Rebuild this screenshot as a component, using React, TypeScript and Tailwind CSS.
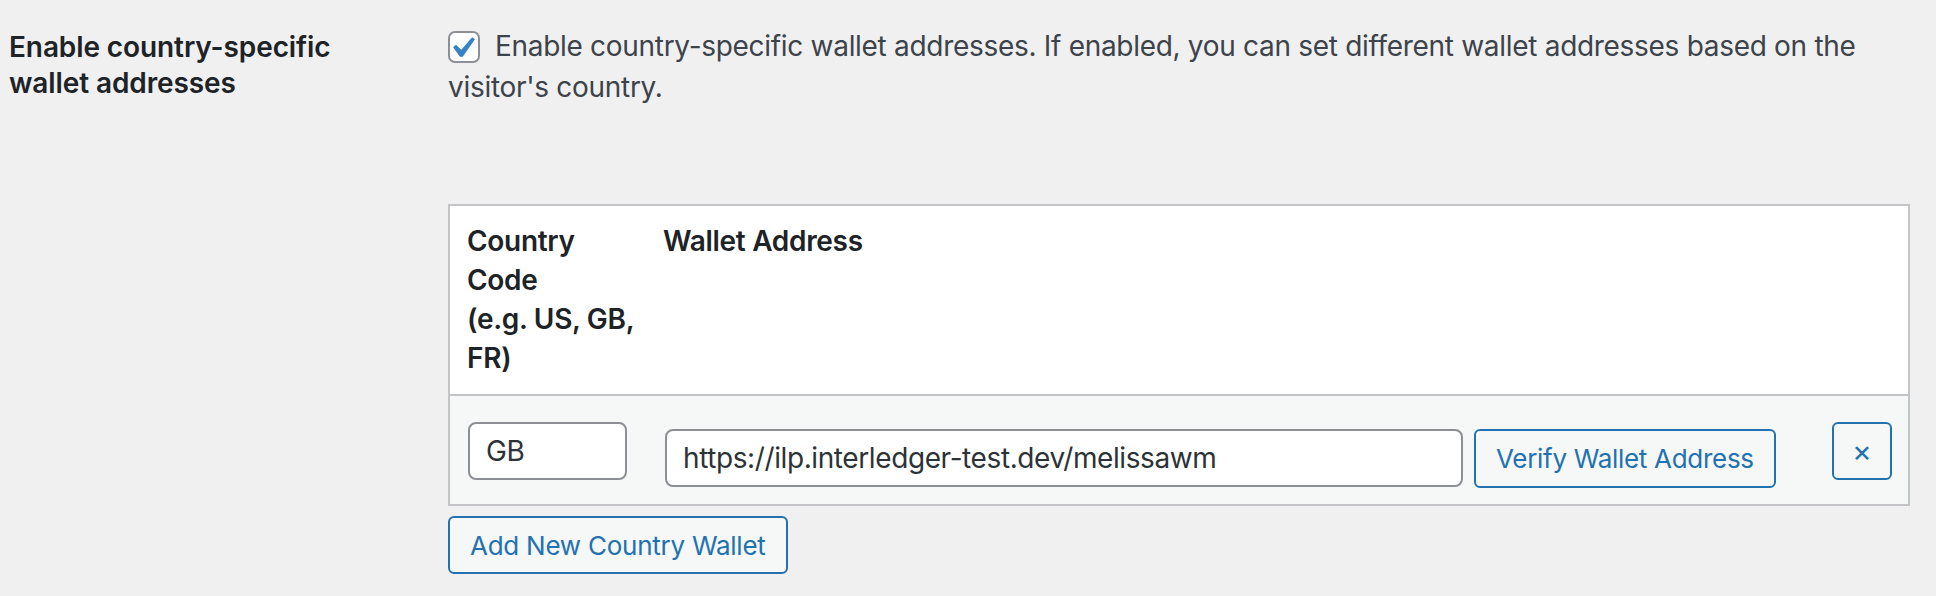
import { useState } from 'react';

interface CountryWallet {
  code: string;
  wallet: string;
}

export default function App() {
  const [enabled, setEnabled] = useState(true);
  const [rows, setRows] = useState<CountryWallet[]>([
    { code: 'GB', wallet: 'https://ilp.interledger-test.dev/melissawm' },
  ]);

  const removeRow = (i: number) => setRows(prev => prev.filter((_, idx) => idx !== i));
  const addRow = () => setRows(prev => [...prev, { code: '', wallet: '' }]);

  return (
    <div className="min-h-[596px] bg-[#f0f0f1] font-[Inter,sans-serif] flex">
      <div className="w-[448px] shrink-0 pl-[9px] pt-[29px] text-[28px] leading-[36.4px] font-semibold tracking-[-0.1px] text-[#1d2327] whitespace-nowrap">
        Enable country-specific<br />wallet addresses
      </div>

      <div className="pt-[26px] flex flex-col items-start">
        <label className="block text-[28px] leading-[41px] tracking-[-0.3px] text-[#3c434a] whitespace-nowrap">
          <span
            onClick={() => setEnabled(!enabled)}
            className="relative inline-block align-middle mt-[-3px] mr-[15px] w-[32px] h-[32px] bg-white border-2 border-[#8c8f94] rounded-[7px] cursor-pointer"
          >
            {enabled && (
              <svg viewBox="0 0 20 20" className="absolute left-[-9px] top-[-6px] w-[42px] h-[42px]">
                <path fill="#3582c4" d="M14.83 4.89l1.34.94-5.81 8.38H9.02L5.78 9.67l1.34-1.25 2.57 2.4z" />
              </svg>
            )}
          </span>
          Enable country-specific wallet addresses. If enabled, you can set different wallet addresses based on the
          <br />
          visitor's country.
        </label>

        {/* Country wallet table */}
        <div className="mt-[96px] w-[1462px] border-2 border-[#c3c4c7]">
          <div className="flex bg-white border-b-2 border-[#c3c4c7] py-[16px] text-[28px] leading-[39px] font-semibold tracking-[-0.3px] text-[#1d2327] whitespace-nowrap">
            <div className="w-[196px] pl-[17px]">
              Country<br />Code<br />(e.g. US, GB,<br />FR)
            </div>
            <div className="pl-[17px]">Wallet Address</div>
          </div>

          {rows.map((r, i) => (
            <div key={i} className="flex items-start h-[108px] bg-[#f6f7f7]">
              <div className="w-[196px] pl-[18px] pt-[26px]">
                <input
                  readOnly
                  value={r.code}
                  className="w-[159px] h-[58px] px-[16px] bg-white border-2 border-[#8c8f94] rounded-[8px] text-[28px] tracking-[-0.4px] text-[#2c3338] outline-none"
                />
              </div>
              <div className="flex items-start gap-[11px] pl-[19px] pt-[33px]">
                <input
                  readOnly
                  value={r.wallet}
                  className="w-[798px] h-[58px] px-[16px] bg-white border-2 border-[#8c8f94] rounded-[8px] text-[28px] tracking-[-0.4px] text-[#2c3338] outline-none"
                />
                <button className="h-[59px] px-[20px] border-2 border-[#2271b1] rounded-[6px] bg-[#f6f7f7] text-[26px] tracking-[-0.3px] text-[#2271b1] whitespace-nowrap cursor-pointer">
                  Verify Wallet Address
                </button>
              </div>
              <div className="ml-auto pr-[16px] pt-[26px]">
                <button
                  onClick={() => removeRow(i)}
                  className="w-[60px] h-[58px] flex items-center justify-center border-2 border-[#2271b1] rounded-[6px] bg-[#f6f7f7] text-[30px] text-[#2271b1] cursor-pointer"
                >
                  ×
                </button>
              </div>
            </div>
          ))}
        </div>

        <button
          onClick={addRow}
          className="mt-[10px] h-[58px] px-[20px] border-2 border-[#2271b1] rounded-[6px] bg-[#f6f7f7] text-[26px] tracking-[-0.25px] text-[#2271b1] whitespace-nowrap cursor-pointer"
        >
          Add New Country Wallet
        </button>
      </div>
    </div>
  );
}
